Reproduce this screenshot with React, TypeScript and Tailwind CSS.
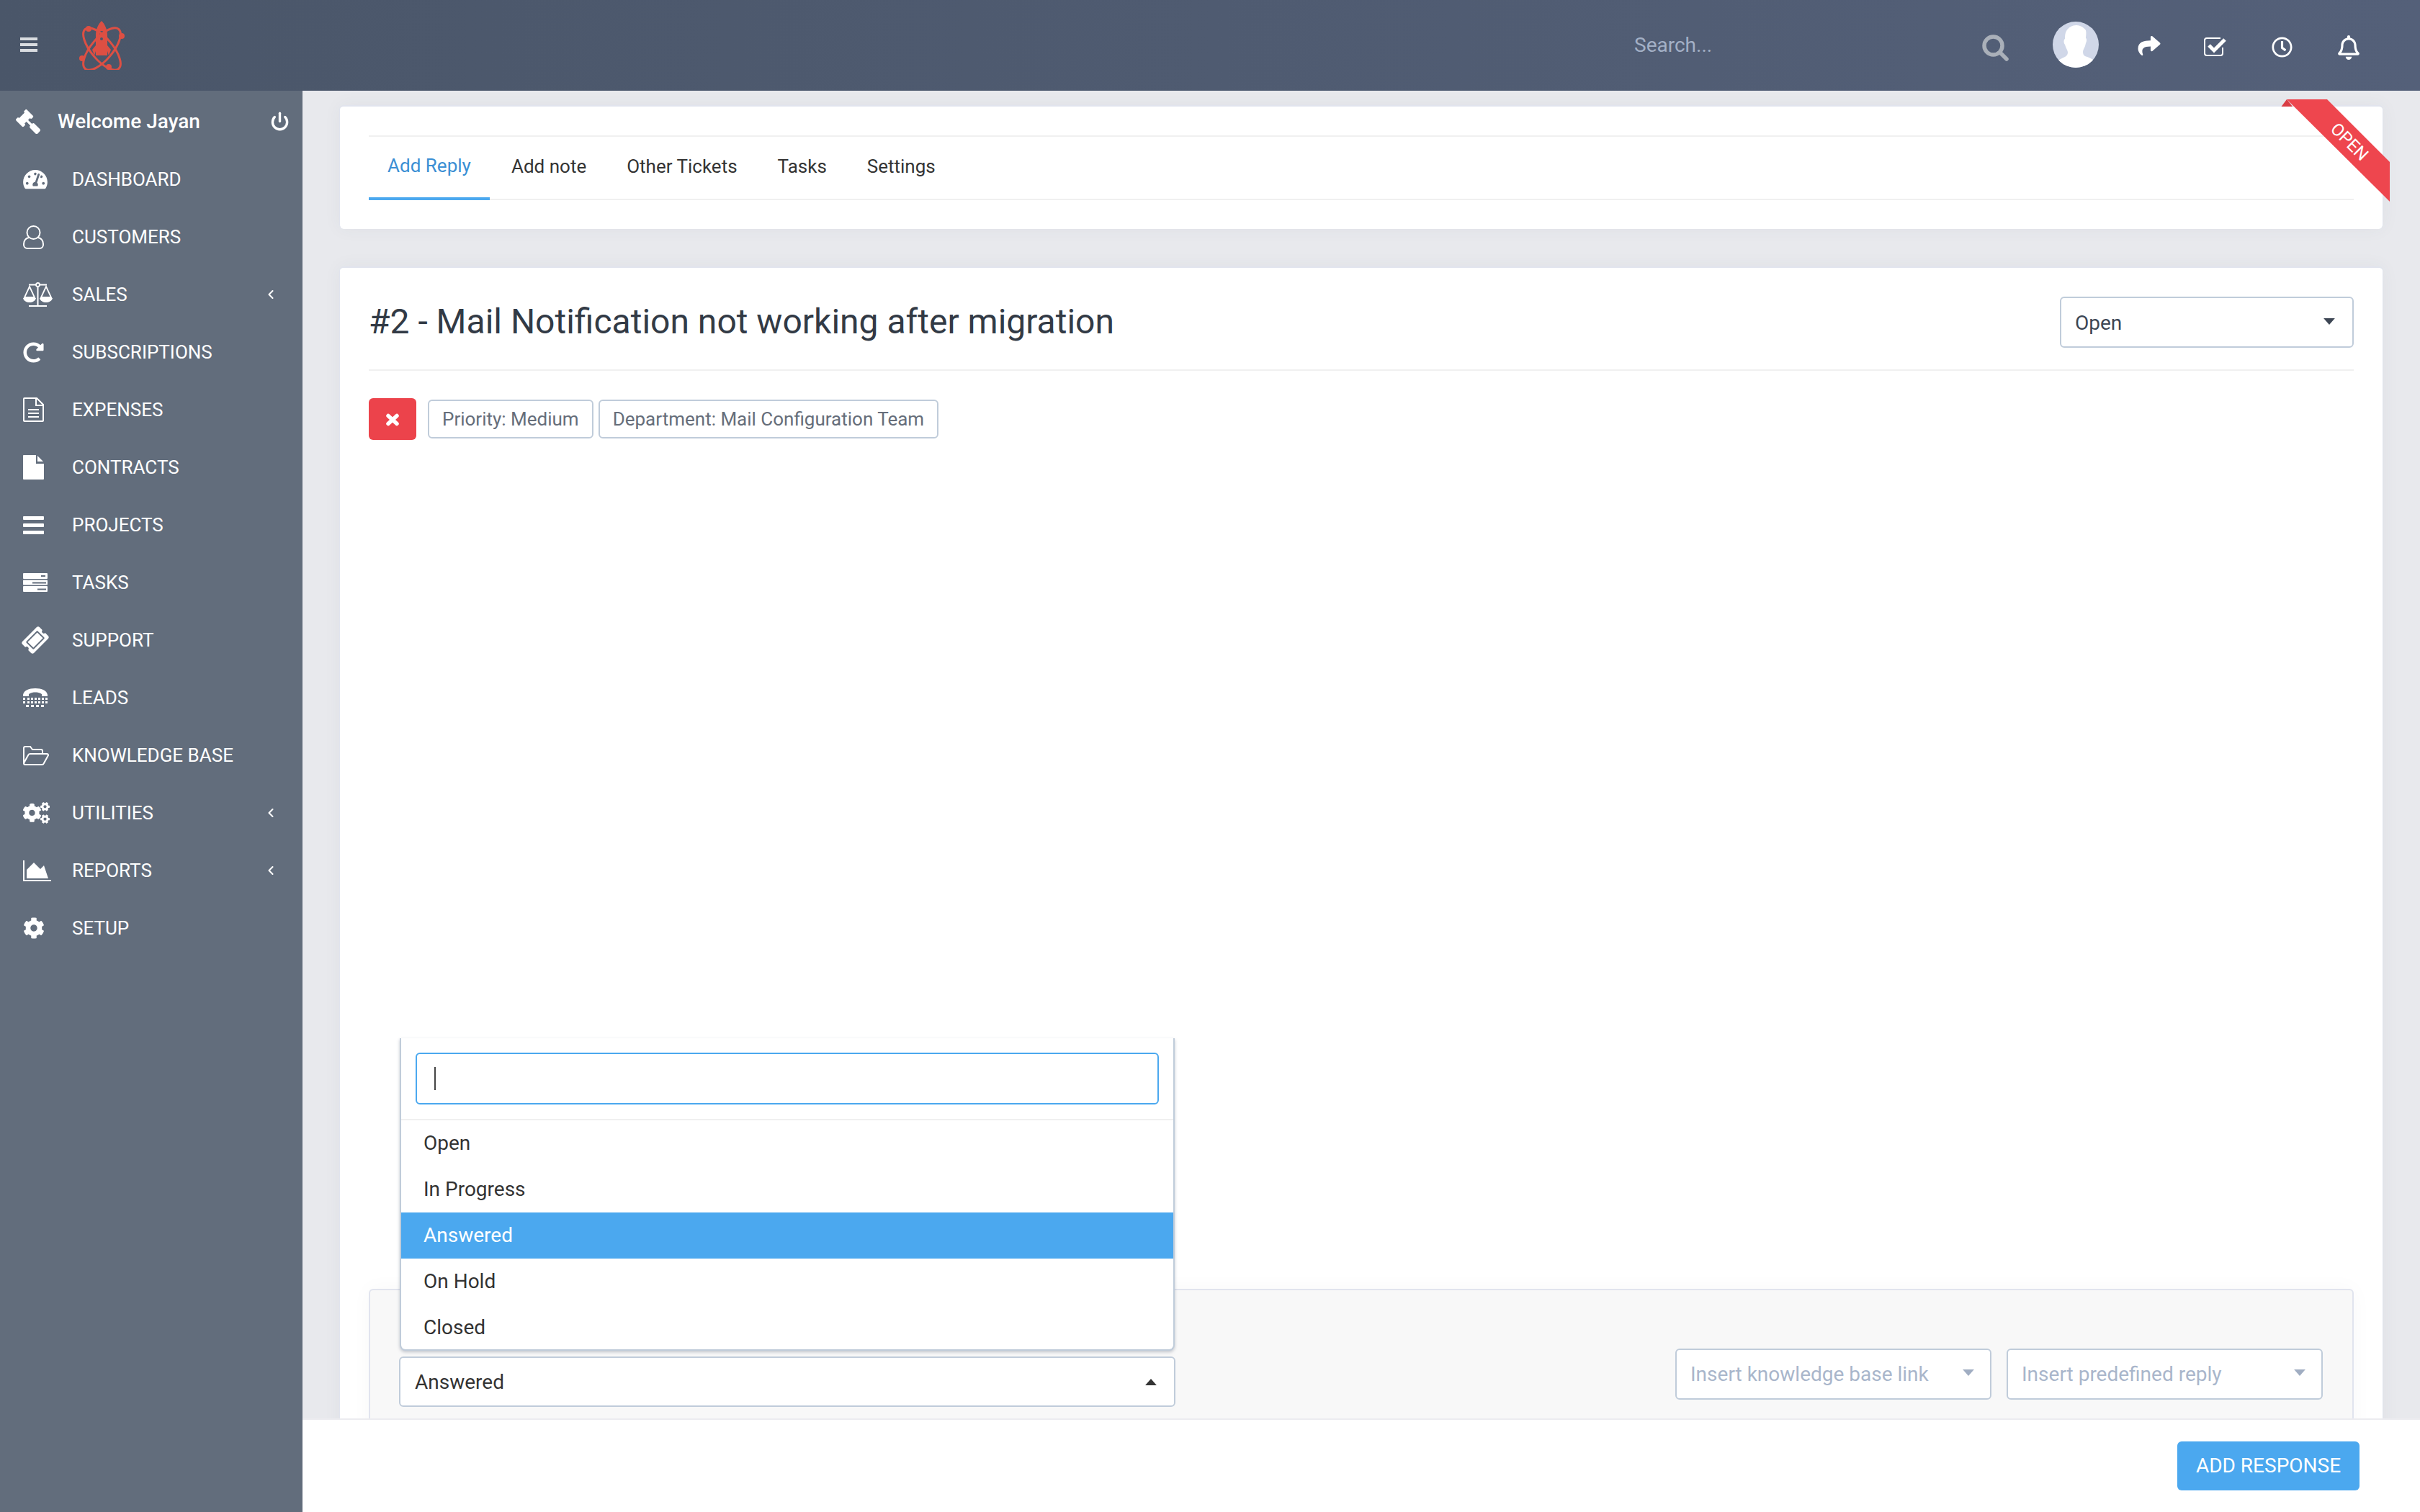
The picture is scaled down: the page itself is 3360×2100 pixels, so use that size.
import { Power, ChevronLeft } from 'lucide-react';
import {
  FaGavel,
  FaTachometerAlt,
  FaRedoAlt,
  FaTicketAlt,
  FaCogs,
  FaCog,
  FaShare,
  FaRegClock,
  FaRegBell,
} from 'react-icons/fa';

type IconProps = { className?: string };

function UserIcon({ className }: IconProps) {
  return (
    <svg className={className} viewBox="0 0 29 33" fill="none" stroke="currentColor" strokeWidth="2">
      <circle cx="14.500" cy="10" r="9" />
      <path d="M8 17c-4 1-7 4-7 9v1a5 5 0 0 0 5 5h17a5 5 0 0 0 5-5v-1c0-5-3-8-7-9" />
    </svg>
  );
}

function ScaleIcon({ className }: IconProps) {
  return (
    <svg className={className} viewBox="0 0 41 34" fill="none" stroke="currentColor" strokeWidth="1.800">
      <path d="M20.500 4v28M8 3.500h25M8 33h25" strokeWidth="2" />
      <circle cx="20.500" cy="3.500" r="2.500" fill="#626d7c" />
      <path d="M9 6L2 21h14zM32 6l-7 15h14z" />
      <path d="M0 22h18c-1 4-5 6-9 6s-8-2-9-6zM23 22h18c-1 4-5 6-9 6s-8-2-9-6z" fill="currentColor" stroke="none" />
    </svg>
  );
}

function FileTextIcon({ className }: IconProps) {
  return (
    <svg className={className} viewBox="0 0 29 34" fill="none" stroke="currentColor" strokeWidth="2">
      <path d="M2 1h17l9 9v22a1 1 0 0 1-1 1H2a1 1 0 0 1-1-1V2a1 1 0 0 1 1-1z" />
      <path d="M18 1v10h10M7 17h15M7 22h15M7 27h15" />
    </svg>
  );
}

function FileIcon({ className }: IconProps) {
  return (
    <svg className={className} viewBox="0 0 29 34" fill="currentColor">
      <path d="M1 0h17v12h11v21a1 1 0 0 1-1 1H1a1 1 0 0 1-1-1V1a1 1 0 0 1 1-1z" />
      <path d="M20 1l8 8h-8z" />
    </svg>
  );
}

function BarsIcon({ className }: IconProps) {
  return (
    <svg className={className} viewBox="0 0 29 25" fill="currentColor">
      <rect width="29" height="5" rx="1" />
      <rect y="10" width="29" height="5" rx="1" />
      <rect y="20" width="29" height="5" rx="1" />
    </svg>
  );
}

function TasksIcon({ className }: IconProps) {
  return (
    <svg className={className} viewBox="0 0 34 26" fill="currentColor">
      <path d="M1 0h32a1 1 0 0 1 1 1v6a1 1 0 0 1-1 1H1a1 1 0 0 1-1-1V1a1 1 0 0 1 1-1zm24 3v2h6V3zM1 9.500h32a1 1 0 0 1 1 1v5a1 1 0 0 1-1 1H1a1 1 0 0 1-1-1v-5a1 1 0 0 1 1-1zm12 3v2h19v-2zM1 18h32a1 1 0 0 1 1 1v6a1 1 0 0 1-1 1H1a1 1 0 0 1-1-1v-6a1 1 0 0 1 1-1zm19 3.500v2h12v-2z" fillRule="evenodd" />
    </svg>
  );
}

function TtyIcon({ className }: IconProps) {
  return (
    <svg className={className} viewBox="0 0 34 26" fill="currentColor">
      <path d="M0 9C1 3 8 0 17 0s16 3 17 9v2h-8V8c-3-2-6-2.500-9-2.500S11 6 8 8v3H0z" />
      <path d="M0 13h3v3H0zM6 13h3v3H6zM11 13h3v3h-3zM16 13h3v3h-3zM21 13h3v3h-3zM26 13h3v3h-3zM31 13h3v3h-3z" />
      <path d="M0 18h3v3H0zM31 18h3v3h-3zM6 18h3v3H6zM11 18h3v3h-3zM16 18h3v3h-3zM21 18h3v3h-3zM26 18h3v3h-3z" />
      <path d="M4 23h4v3H4zM11 23h4v3h-4zM18 23h4v3h-4zM25 23h4v3h-4z" />
    </svg>
  );
}

function FolderIcon({ className }: IconProps) {
  return (
    <svg className={className} viewBox="0 0 36 27" fill="none" stroke="currentColor" strokeWidth="2">
      <path d="M1 24V3a2 2 0 0 1 2-2h7l3 4h12a2 2 0 0 1 2 2v4" />
      <path d="M1 24l6-11a3 3 0 0 1 3-2h23a2 2 0 0 1 2 2l-6 11a3 3 0 0 1-3 2H3a2 2 0 0 1-2-2z" />
    </svg>
  );
}

function AreaChartIcon({ className }: IconProps) {
  return (
    <svg className={className} viewBox="0 0 39 29" fill="currentColor">
      <path d="M0 0h2v27h37v2H0z" />
      <path d="M5 25V13L15 3l9 9 5-5 6 18z" />
    </svg>
  );
}

function SearchIcon({ className }: IconProps) {
  return (
    <svg className={className} viewBox="0 0 37 37" fill="none" stroke="currentColor" strokeWidth="5.500">
      <circle cx="15.500" cy="15.500" r="12.500" />
      <path d="M25 25l9 9" strokeLinecap="round" />
    </svg>
  );
}

function CheckSquareIcon({ className }: IconProps) {
  return (
    <svg className={className} viewBox="0 0 32 28" fill="none" stroke="currentColor">
      <path d="M23 2H4a3 3 0 0 0-3 3v18a3 3 0 0 0 3 3h19a3 3 0 0 0 3-3v-8" strokeWidth="2" />
      <path d="M7 12l7 7L29 4" strokeWidth="5" />
    </svg>
  );
}

function TimesIcon({ className }: IconProps) {
  return (
    <svg className={className} viewBox="0 0 20 18" fill="none" stroke="currentColor" strokeWidth="5.500" strokeLinecap="round">
      <path d="M4 3.500l12 11M16 3.500l-12 11" />
    </svg>
  );
}

function Logo() {
  return (
    <svg className="w-[64px] h-[68px]" viewBox="0 0 64 68" fill="none" stroke="#dd4f43" strokeWidth="3">
      <ellipse cx="31.500" cy="39" rx="15" ry="36" transform="rotate(-40 31.500 39)" />
      <ellipse cx="31.500" cy="39" rx="15" ry="36" transform="rotate(40 31.500 39)" />
      <g fill="#dd4f43" stroke="none">
        <circle cx="13" cy="11" r="4" />
        <circle cx="59" cy="21" r="4" />
        <circle cx="4" cy="52" r="4" />
        <circle cx="41" cy="64" r="4" />
        <path fillRule="evenodd" d="M31 0c5 5 8 12 8 20v28H23V20c0-8 3-15 8-20zm0 14a3 3 0 1 0 0 6 3 3 0 0 0 0-6zm0 9a2 2 0 1 0 0 4 2 2 0 0 0 0-4z" />
        <path d="M23 34l-5 6 3 8 2-6zM39 34l5 6-3 8-2-6z" />
      </g>
    </svg>
  );
}

function Avatar() {
  return (
    <div className="w-[64px] h-[64px] rounded-full bg-[#d0d7e8] overflow-hidden">
      <svg className="w-[64px] h-[64px]" viewBox="0 0 64 64" fill="white">
        <path d="M19 13c3-5 8-8 14-8 5 0 10 3 13 7 1 4 0 8 0 11 2 1 1 5 0 7l-1 4c-1 3-3 5-3 8s1 5 3 6c6 2 11 4 14 8v8H4v-7c4-4 9-6 13-8 2-1 4-3 4-6s-2-5-3-8l-1-3c-2-2-2-7 0-8 0-4 0-7 2-11z" />
      </svg>
    </div>
  );
}

const navItems = [
  { label: 'DASHBOARD', icon: <FaTachometerAlt className="w-[34px] h-[30px]" /> },
  { label: 'CUSTOMERS', icon: <UserIcon className="w-[29px] h-[33px]" /> },
  { label: 'SALES', icon: <ScaleIcon className="w-[41px] h-[34px]" />, arrow: true },
  { label: 'SUBSCRIPTIONS', icon: <FaRedoAlt className="w-[29px] h-[29px]" /> },
  { label: 'EXPENSES', icon: <FileTextIcon className="w-[29px] h-[34px]" /> },
  { label: 'CONTRACTS', icon: <FileIcon className="w-[29px] h-[34px]" /> },
  { label: 'PROJECTS', icon: <BarsIcon className="w-[29px] h-[25px]" /> },
  { label: 'TASKS', icon: <TasksIcon className="w-[34px] h-[26px]" /> },
  { label: 'SUPPORT', icon: <FaTicketAlt className="w-[34px] h-[30px] -rotate-45" /> },
  { label: 'LEADS', icon: <TtyIcon className="w-[34px] h-[26px]" /> },
  { label: 'KNOWLEDGE BASE', icon: <FolderIcon className="w-[36px] h-[27px]" /> },
  { label: 'UTILITIES', icon: <FaCogs className="w-[37px] h-[34px]" />, arrow: true },
  { label: 'REPORTS', icon: <AreaChartIcon className="w-[39px] h-[29px]" />, arrow: true },
  { label: 'SETUP', icon: <FaCog className="w-[30px] h-[30px]" /> },
];

function Caret({ up, className }: { up?: boolean; className?: string }) {
  return (
    <svg className={className} viewBox="0 0 14 8" fill="currentColor">
      <path d={up ? 'M7 0l7 8H0z' : 'M0 0h14L7 8z'} />
    </svg>
  );
}

function Sidebar() {
  return (
    <aside className="w-[420px] shrink-0 bg-[#626d7c] text-white">
      <div className="h-[83px] pt-[2px] pl-[22px] pr-[18px] flex items-center">
        <FaGavel className="w-[34px] h-[34px] -scale-x-100" />
        <span className="ml-[24px] text-[28px] font-medium flex-1">Welcome Jayan</span>
        <Power className="w-[27px] h-[27px]" strokeWidth={3} />
      </div>
      <nav>
        {navItems.map((item) => (
          <div key={item.label} className="h-[80px] pl-[32px] pr-[34px] flex items-center">
            <div className="w-[68px] shrink-0 flex items-center">{item.icon}</div>
            <span className="text-[26px] flex-1">{item.label}</span>
            {item.arrow && <ChevronLeft className="w-[20px] h-[20px]" strokeWidth={2.5} />}
          </div>
        ))}
      </nav>
    </aside>
  );
}

function Header() {
  return (
    <header className="h-[126px] shrink-0 bg-gradient-to-r from-[#4a5669] to-[#546079] flex items-center">
      <div className="w-[420px] shrink-0 flex items-center pl-[28px]">
        <div className="w-[24px] -mt-[2px] flex flex-col gap-[4px]">
          <div className="h-[4px] bg-[#d9dce0]" />
          <div className="h-[4px] bg-[#d9dce0]" />
          <div className="h-[4px] bg-[#d9dce0]" />
        </div>
        <div className="ml-[58px]">
          <Logo />
        </div>
      </div>
      <div className="ml-[1849px] w-[483px] text-[28px] text-[#a3b0c6]">Search...</div>
      <SearchIcon className="w-[37px] h-[37px] text-[#aab0b9] mt-[7px]" />
      <div className="ml-[61px] -mt-[2px]">
        <Avatar />
      </div>
      <FaShare className="ml-[53px] w-[34px] h-[31px] text-white" />
      <CheckSquareIcon className="ml-[59px] w-[32px] h-[28px] text-white mt-[3px]" />
      <FaRegClock className="ml-[62px] w-[29px] h-[29px] text-white mt-[5px]" />
      <FaRegBell className="ml-[62px] w-[32px] h-[34px] text-white mt-[6px]" />
    </header>
  );
}

function GhostSelect({ label }: { label: string }) {
  return (
    <div className="w-[439px] h-[71px] rounded-[6px] border-2 border-[#c0ccda] bg-white pl-[19px] pr-[22px] flex items-center justify-between text-[28px] text-[#a9b6cb]">
      <span>{label}</span>
      <Caret className="w-[16px] h-[9px] text-[#a0adc2] -mt-[4px]" />
    </div>
  );
}

function StatusDropdown() {
  const options = ['Open', 'In Progress', 'Answered', 'On Hold', 'Closed'];
  return (
    <div className="absolute left-[555px] top-[1442px] w-[1076px] h-[434px] bg-white rounded-b-[8px] border-x-2 border-b-2 border-[#c0ccda] shadow-[0_2px_4px_rgba(90,100,120,0.35)] z-10">
      <div className="h-[114px] border-b-2 border-[#f0f0f0] pt-[20px] px-[20px]">
        <div className="h-[72px] rounded-[6px] border-2 border-[#4ba8ef] flex items-center pl-[24px]">
          <div className="w-[2px] h-[32px] bg-[#444]" />
        </div>
      </div>
      {options.map((opt) => (
        <div
          key={opt}
          className={`h-[64px] pl-[31px] flex items-center text-[28px] ${
            opt === 'Answered' ? 'bg-[#4ba8ef] text-white' : 'text-[#333]'
          }`}
        >
          {opt}
        </div>
      ))}
    </div>
  );
}

export default function App() {
  const tabs = ['Add note', 'Other Tickets', 'Tasks', 'Settings'];
  return (
    <div className="relative w-[3360px] h-[2100px] overflow-hidden flex flex-col bg-[#e8e9ed] font-['Roboto',sans-serif]">
      <Header />
      <div className="flex flex-1 min-h-0">
        <Sidebar />
        <main className="flex-1 min-w-0 pt-[20px] pl-[51px] pr-[51px]">
          <div className="h-[172px] bg-white rounded-[6px] border-x border-t-2 border-[#e1e4ee] shadow-[0_0_24px_rgba(60,70,100,0.05)] px-[40px] pt-[40px]">
            <div className="h-[90px] border-y-2 border-[#f0f0f0] flex items-center">
              <div className="h-[88px] w-[168px] pb-[4px] flex items-center justify-center border-b-[4px] border-[#4ba8ef] text-[26px] text-[#3b8fd4] mb-[-2px]">
                Add Reply
              </div>
              <div className="flex gap-[56px] ml-[30px] -mt-[3px] text-[26px] text-[#333]">
                {tabs.map((t) => (
                  <span key={t}>{t}</span>
                ))}
              </div>
            </div>
          </div>
          <div className="mt-[52px] h-[1702px] bg-white rounded-[6px] border-x border-t-2 border-[#e1e4ee] shadow-[0_0_24px_rgba(60,70,100,0.05)] px-[40px]">
            <div className="h-[143px] pt-[9px] border-b-2 border-[#f0f0f0] flex items-center justify-between">
              <h1 className="text-[48px] leading-none text-[#323a45]">
                #2 - Mail Notification not working after migration
              </h1>
              <div className="w-[408px] h-[71px] rounded-[6px] border-2 border-[#c0ccda] pl-[19px] pr-[24px] pt-[3px] flex items-center justify-between text-[28px] text-[#3d4654]">
                <span>Open</span>
                <Caret className="w-[16px] h-[9px] text-[#3d4654] -mt-[4px]" />
              </div>
            </div>
            <div className="mt-[38px] flex items-center">
              <div className="w-[66px] h-[58px] rounded-[6px] bg-[#ec434b] flex items-center justify-center">
                <TimesIcon className="w-[20px] h-[18px] text-white mt-[2px]" />
              </div>
              <div className="ml-[16px] h-[54px] px-[18px] rounded-[6px] border-2 border-[#c0ccda] flex items-center text-[26px] text-[#666e7a]">
                Priority: Medium
              </div>
              <div className="ml-[7px] h-[54px] px-[18px] rounded-[6px] border-2 border-[#c0ccda] flex items-center text-[26px] text-[#666e7a]">
                Department: Mail Configuration Team
              </div>
            </div>
            <div className="mt-[1179px] h-[400px] rounded-[6px] border-2 border-[#e1e4ee] bg-[#f8f8f8] shadow-[0_0_30px_rgba(0,0,0,0.03)] pt-[79px] pl-[40px] pr-[41px] flex justify-between items-start">
              <div className="w-[1078px] h-[70px] mt-[13px] pt-[2px] border-2 border-[#c0ccda] bg-white rounded-[6px] flex items-center justify-between pl-[20px] pr-[24px] text-[28px] text-[#333]">
                <span>Answered</span>
                <Caret up className="w-[16px] h-[9px] text-[#333] -mt-[2px]" />
              </div>
              <div className="flex gap-[21px] mt-[2px]">
                <GhostSelect label="Insert knowledge base link" />
                <GhostSelect label="Insert predefined reply" />
              </div>
            </div>
          </div>
        </main>
      </div>

      {/* ribbon hangs over the card corner */}
      <div className="absolute left-[3160px] top-[130px] w-[160px] h-[160px] overflow-hidden pointer-events-none">
        <svg className="absolute inset-0 w-full h-full" viewBox="0 0 160 160">
          <path d="M7.500 18L15 8l8 10z" fill="#d93c44" />
          <path d="M15 8h56l87 87v55z" fill="#ee464e" />
        </svg>
        <span className="absolute left-[62px] top-[53px] w-[80px] text-center rotate-45 text-[24px] leading-[28px] text-white">OPEN</span>
      </div>

      <StatusDropdown />

      <div className="absolute left-[420px] right-0 bottom-0 h-[130px] bg-white border-t-2 border-[#ececf0] flex items-center justify-end pr-[84px]">
        <button className="w-[253px] h-[68px] rounded-[6px] bg-[#4ba8ef] text-white text-[28px]">ADD RESPONSE</button>
      </div>
    </div>
  );
}
